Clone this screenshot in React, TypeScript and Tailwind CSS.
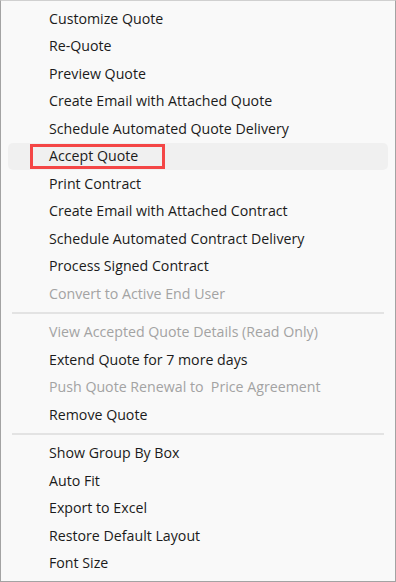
type Item = { label: string; disabled?: boolean; active?: boolean };

const groups: Item[][] = [
  [
    { label: "Customize Quote" },
    { label: "Re-Quote" },
    { label: "Preview Quote" },
    { label: "Create Email with Attached Quote" },
    { label: "Schedule Automated Quote Delivery" },
    { label: "Accept Quote", active: true },
    { label: "Print Contract" },
    { label: "Create Email with Attached Contract" },
    { label: "Schedule Automated Contract Delivery" },
    { label: "Process Signed Contract" },
    { label: "Convert to Active End User", disabled: true },
  ],
  [
    { label: "View Accepted Quote Details (Read Only)", disabled: true },
    { label: "Extend Quote for 7 more days" },
    { label: "Push Quote Renewal to  Price Agreement", disabled: true },
    { label: "Remove Quote" },
  ],
  [
    { label: "Show Group By Box" },
    { label: "Auto Fit" },
    { label: "Export to Excel" },
    { label: "Restore Default Layout" },
    { label: "Font Size" },
  ],
];

const MenuRow = ({ item }: { item: Item }) => (
  <div
    className={`h-[27.5px] flex items-center pl-[41px] ${
      item.active ? "bg-[#f0f0f0] rounded-[5px]" : ""
    }`}
  >
    <span
      className={`whitespace-pre text-[14.2px] leading-none ${
        item.disabled ? "text-[#a3a3a3]" : "text-[#1b1b1b]"
      } ${
        item.active
          ? "border-[3px] border-[#f44646] h-[25px] flex items-center -ml-[19px] pl-[16px] w-[135px]"
          : ""
      }`}
    >
      {item.label}
    </span>
  </div>
);

export default function App() {
  return (
    <div
      className="w-[396px] h-[582px] bg-[#f9f9f9] border border-[#a3a3a3] border-t-[#d0d0d0] overflow-hidden"
      style={{ fontFamily: '"Open Sans", "Noto Sans", sans-serif' }}
    >
      <div className="pt-[4px] px-[7px]">
        {groups.map((group, gi) => (
          <div key={gi}>
            {gi > 0 && (
              <div className="h-[11px] flex items-center px-[4px]">
                <div className="h-[2px] w-full bg-[#e3e3e3]" />
              </div>
            )}
            {group.map((item) => (
              <MenuRow key={item.label} item={item} />
            ))}
          </div>
        ))}
      </div>
    </div>
  );
}
